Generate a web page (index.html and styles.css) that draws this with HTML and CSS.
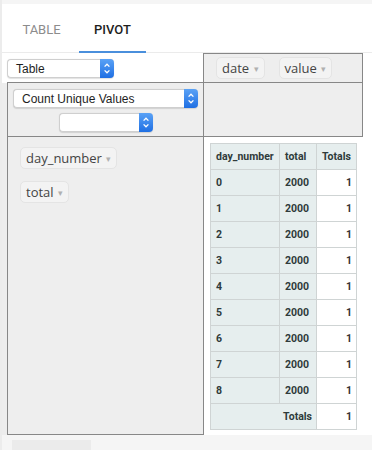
FILE: index.html
```html
<!DOCTYPE html>
<html>
<head>
<meta charset="utf-8">
<link rel="stylesheet" href="styles.css">
</head>
<body>
<div class="app">
  <div class="topstrip"></div>
  <div class="tabbar">
    <div class="tab">TABLE</div>
    <div class="tab active">PIVOT</div>
  </div>
  <div class="pivot">
    <div class="pad-white"></div>
    <div class="cell renderers">
      <div class="select sel-table"><span class="sel-text">Table</span><svg class="stepper" width="14" height="19" viewBox="0 0 14 19"><defs><linearGradient id="g1" x1="0" y1="0" x2="0" y2="1"><stop offset="0" stop-color="#5aa2f6"/><stop offset="1" stop-color="#1f6fe3"/></linearGradient></defs><path d="M0 0 H10 A4 4 0 0 1 14 4 V15 A4 4 0 0 1 10 19 H0 Z" fill="url(#g1)"/><path d="M4.6 7.6 L7 5.2 L9.4 7.6 M4.6 11.4 L7 13.8 L9.4 11.4" fill="none" stroke="#fff" stroke-width="1.3"/></svg></div>
    </div>
    <div class="cell unused">
      <span class="pill">date <span class="tri">▾</span></span>
      <span class="pill">value <span class="tri">▾</span></span>
    </div>
    <div class="pad-gray"></div>
    <div class="cell vals">
      <div class="select sel-agg"><span class="sel-text">Count Unique Values</span><svg class="stepper" width="14" height="19" viewBox="0 0 14 19"><defs><linearGradient id="g2" x1="0" y1="0" x2="0" y2="1"><stop offset="0" stop-color="#5aa2f6"/><stop offset="1" stop-color="#1f6fe3"/></linearGradient></defs><path d="M0 0 H10 A4 4 0 0 1 14 4 V15 A4 4 0 0 1 10 19 H0 Z" fill="url(#g2)"/><path d="M4.6 7.6 L7 5.2 L9.4 7.6 M4.6 11.4 L7 13.8 L9.4 11.4" fill="none" stroke="#fff" stroke-width="1.3"/></svg></div>
      <div class="select sel-empty"><span class="sel-text"></span><svg class="stepper" width="14" height="19" viewBox="0 0 14 19"><defs><linearGradient id="g3" x1="0" y1="0" x2="0" y2="1"><stop offset="0" stop-color="#5aa2f6"/><stop offset="1" stop-color="#1f6fe3"/></linearGradient></defs><path d="M0 0 H10 A4 4 0 0 1 14 4 V15 A4 4 0 0 1 10 19 H0 Z" fill="url(#g3)"/><path d="M4.6 7.6 L7 5.2 L9.4 7.6 M4.6 11.4 L7 13.8 L9.4 11.4" fill="none" stroke="#fff" stroke-width="1.3"/></svg></div>
    </div>
    <div class="cell cols"></div>
    <div class="pad-gray"></div>
    <div class="cell rows">
      <span class="pill">day_number <span class="tri">▾</span></span>
      <span class="pill">total <span class="tri">▾</span></span>
    </div>
    <div class="cell output">
      <table class="pvt">
        <colgroup><col class="c1"><col class="c2"><col class="c3"></colgroup>
        <thead>
          <tr><th>day_number</th><th>total</th><th>Totals</th></tr>
        </thead>
        <tbody>
          <tr><th>0</th><th>2000</th><td>1</td></tr>
          <tr><th>1</th><th>2000</th><td>1</td></tr>
          <tr><th>2</th><th>2000</th><td>1</td></tr>
          <tr><th>3</th><th>2000</th><td>1</td></tr>
          <tr><th>4</th><th>2000</th><td>1</td></tr>
          <tr><th>5</th><th>2000</th><td>1</td></tr>
          <tr><th>6</th><th>2000</th><td>1</td></tr>
          <tr><th>7</th><th>2000</th><td>1</td></tr>
          <tr><th>8</th><th>2000</th><td>1</td></tr>
          <tr><th colspan="2" class="tot-label">Totals</th><td>1</td></tr>
        </tbody>
      </table>
    </div>
  </div>
  <div class="footer"><div class="footer-block"></div></div>
</div>
</body>
</html>
```

FILE: styles.css
```css
html, body {
  margin: 0;
  padding: 0;
  background: #ffffff;
}
.app {
  width: 370px;
  height: 450px;
  border-left: 2px solid #ececec;
  overflow: hidden;
  font-family: Roboto, "Liberation Sans", sans-serif;
}
.topstrip {
  height: 4px;
  background: #f5f5f5;
}
.tabbar {
  display: flex;
  height: 48px;
  border-bottom: 1px solid #ebebeb;
  padding-left: 6px;
  gap: 4px;
}
.tab {
  margin-bottom: -1px;
  padding: 4px 0 0 0;
  box-sizing: border-box;
  display: flex;
  align-items: center;
  justify-content: center;
  width: 67px;
  height: 49px;
  font-size: 13px;
  font-weight: 400;
  color: #8c8c8c;
  border-bottom: 2px solid transparent;
}
.tab.active {
  color: #1e1e1e;
  font-weight: 500;
  border-bottom-color: #4a8fdc;
}
.pivot {
  display: grid;
  grid-template-columns: 5px 197px 159px;
  grid-template-rows: 30px 54px 298px;
}
.pad-white {
  background: #fff;
}
.pad-gray {
  background: #ededed;
}
.cell {
  box-sizing: border-box;
  border: 0 solid #878787;
}
.renderers {
  border-right-width: 1px;
  border-bottom-width: 1px;
  padding-top: 6px;
  background: #fff;
}
.unused {
  border-top-width: 1px;
  border-right-width: 1px;
  border-bottom-width: 1px;
  background: #eeeeee;
  display: flex;
  align-items: flex-start;
  gap: 14px;
  padding: 3px 0 0 12px;
}
.vals {
  border-left-width: 1px;
  border-right-width: 1px;
  border-bottom-width: 1px;
  background: #eeeeee;
  display: flex;
  flex-direction: column;
  align-items: center;
  gap: 5px;
  padding-top: 6px;
}
.cols {
  border-right-width: 1px;
  border-bottom-width: 1px;
  background: #eeeeee;
}
.rows {
  border-left-width: 1px;
  border-right-width: 1px;
  border-bottom-width: 1px;
  background: #eeeeee;
  display: flex;
  flex-direction: column;
  align-items: flex-start;
  gap: 12px;
  padding: 10px 0 0 12px;
}
.output {
  background: #fff;
  padding: 6px 0 0 6px;
}
.pill {
  display: inline-flex;
  align-items: center;
  height: 22px;
  box-sizing: border-box;
  padding: 0 5px 0 5px;
  background: #f3f3f3;
  border: 1px solid #e4e4e4;
  border-radius: 5px;
  font-family: "Open Sans", "Noto Sans", sans-serif;
  font-size: 13px;
  color: #444;
  white-space: pre;
}
.tri {
  font-size: 9px;
  color: #b0b0b0;
  margin-left: 1px;
}
.select {
  display: flex;
  align-items: center;
  height: 19px;
  box-sizing: border-box;
  background: #fff;
  border: 1px solid #cfcfcf;
  border-right: none;
  border-radius: 4px;
  box-shadow: 0 0.5px 1px rgba(0,0,0,0.12);
  font-family: "Liberation Sans", Arial, sans-serif;
  font-size: 12px;
  color: #1e1e1e;
}
.sel-text {
  flex: 1;
  padding-left: 8px;
}
.stepper {
  flex: none;
  margin-top: -1px;
  margin-bottom: -1px;
}
.sel-table {
  width: 107px;
}
.sel-agg {
  width: 185px;
}
.sel-empty {
  width: 94px;
}
.pvt {
  border-collapse: collapse;
  table-layout: fixed;
  width: 147px;
  font-family: Roboto, "Liberation Sans", sans-serif;
  font-size: 10.5px;
  font-weight: bold;
  color: #2f3b3b;
}
.c1 { width: 69px; }
.c2 { width: 37px; }
.c3 { width: 40px; }
.pvt th, .pvt td {
  border: 1px solid #cfd4d4;
  height: 26px;
  padding: 0 4px 0 5px;
  box-sizing: border-box;
  text-align: left;
  white-space: nowrap;
}
.pvt th {
  background: #e6eeee;
}
.pvt td {
  background: #fff;
  text-align: right;
  color: #333;
}
.pvt th.tot-label {
  text-align: right;
}
.footer {
  height: 20px;
  background: #f5f5f5;
  padding: 5px 0 0 10px;
  box-sizing: border-box;
}
.footer-block {
  width: 79px;
  height: 15px;
  background: #ebebeb;
}
```
